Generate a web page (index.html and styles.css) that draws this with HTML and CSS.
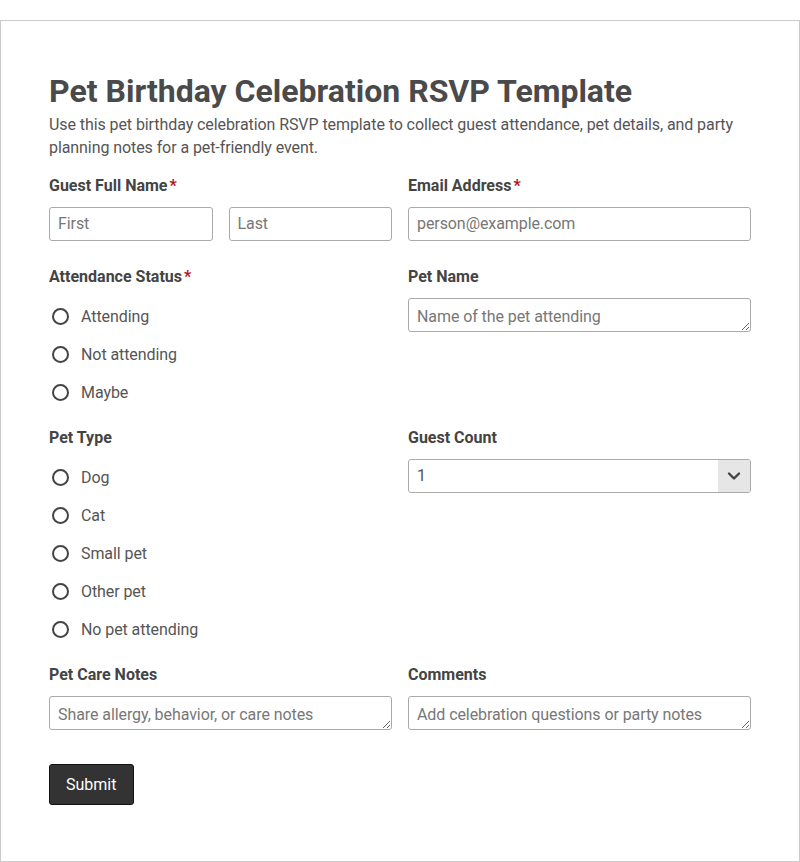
FILE: index.html
```html
<!DOCTYPE html>
<html lang="en">
<head>
    <meta charset="UTF-8">
    <meta name="viewport" content="width=device-width, initial-scale=1.0">
    <title>Pet Birthday Celebration RSVP Template</title>
    <link rel="stylesheet" href="styles.css">
</head>
<body>
    <form class="form-card">
        <h1>Pet Birthday Celebration RSVP Template</h1>
        <p class="intro">Use this pet birthday celebration RSVP template to collect guest attendance, pet details, and party planning notes for a pet-friendly event.</p>

        <div class="form-grid">
            <!-- Nome e email -->
            <div class="field">
                <label class="field-label">Guest Full Name<span class="req">*</span></label>
                <div class="name-row">
                    <input type="text" placeholder="First">
                    <input type="text" placeholder="Last">
                </div>
            </div>
            <div class="field">
                <label class="field-label" for="email">Email Address<span class="req">*</span></label>
                <input type="email" id="email" placeholder="person@example.com">
            </div>

            <div class="field">
                <span class="field-label">Attendance Status<span class="req">*</span></span>
                <div class="radio-list">
                    <label class="radio"><input type="radio" name="attendance"> Attending</label>
                    <label class="radio"><input type="radio" name="attendance"> Not attending</label>
                    <label class="radio"><input type="radio" name="attendance"> Maybe</label>
                </div>
            </div>
            <div class="field">
                <label class="field-label" for="petName">Pet Name</label>
                <textarea id="petName" rows="1" placeholder="Name of the pet attending"></textarea>
            </div>

            <div class="field">
                <span class="field-label">Pet Type</span>
                <div class="radio-list">
                    <label class="radio"><input type="radio" name="petType"> Dog</label>
                    <label class="radio"><input type="radio" name="petType"> Cat</label>
                    <label class="radio"><input type="radio" name="petType"> Small pet</label>
                    <label class="radio"><input type="radio" name="petType"> Other pet</label>
                    <label class="radio"><input type="radio" name="petType"> No pet attending</label>
                </div>
            </div>
            <div class="field">
                <label class="field-label" for="guestCount">Guest Count</label>
                <div class="select-wrap">
                    <select id="guestCount">
                        <option>1</option>
                        <option>2</option>
                        <option>3</option>
                        <option>4</option>
                        <option>5</option>
                    </select>
                    <span class="select-arrow">
                        <svg width="14" height="14" viewBox="0 0 14 14"><path d="M2 4.5 L7 9.5 L12 4.5" fill="none" stroke="#444" stroke-width="2.4" stroke-linecap="round" stroke-linejoin="round"/></svg>
                    </span>
                </div>
            </div>

            <div class="field">
                <label class="field-label" for="careNotes">Pet Care Notes</label>
                <textarea id="careNotes" rows="1" placeholder="Share allergy, behavior, or care notes"></textarea>
            </div>
            <div class="field">
                <label class="field-label" for="comments">Comments</label>
                <textarea id="comments" rows="1" placeholder="Add celebration questions or party notes"></textarea>
            </div>
        </div>

        <button type="button">Submit</button>
    </form>
</body>
</html>
```

FILE: styles.css
```css
body {
    margin: 0;
    padding-top: 20px;
    background-color: #fff;
    color: #4a4a4a;
    font-family: Roboto, "Liberation Sans", Arial, sans-serif;
}
.form-card {
    border: 1px solid #ccc;
    padding: 48px 48px 56px;
    box-sizing: border-box;
    min-height: 842px;
}
h1 {
    margin: 0;
    font-size: 32px;
    line-height: 44px;
    font-weight: bold;
    color: #4a4a4a;
}
.intro {
    margin: 0 0 16px;
    font-size: 16px;
    line-height: 23px;
    color: #555;
    letter-spacing: -0.08px;
}
.form-grid {
    display: grid;
    grid-template-columns: 1fr 1fr;
    column-gap: 16px;
    row-gap: 25px;
}
.field {
    display: flex;
    flex-direction: column;
}
.field-label {
    display: block;
    font-size: 16px;
    line-height: 20px;
    font-weight: bold;
    padding-top: 1px;
    margin-bottom: 11px;
    color: #444;
}
.req {
    color: #b3121b;
    margin-left: 2px;
}
.name-row {
    display: flex;
    gap: 16px;
}
input[type="text"], input[type="email"], textarea, .select-wrap {
    width: 100%;
    height: 34px;
    padding: 5px 8px 7px;
    border: 1px solid #aaa;
    border-radius: 3px;
    background-color: #fff;
    color: #4a4a4a;
    font-family: inherit;
    font-size: 16px;
    line-height: 20px;
    letter-spacing: -0.08px;
    box-sizing: border-box;
    margin: 0;
}
textarea {
    display: block;
    resize: vertical;
    overflow: hidden;
    padding: 8px 8px 4px;
}
::placeholder {
    color: #777;
    opacity: 1;
}
.radio-list {
    display: flex;
    flex-direction: column;
    gap: 18px;
    margin-top: 8px;
}
.radio {
    display: flex;
    align-items: center;
    height: 20px;
    font-size: 16px;
    color: #555;
    letter-spacing: -0.08px;
}
.radio input {
    -webkit-appearance: none;
    appearance: none;
    width: 17px;
    height: 17px;
    border: 2px solid #444;
    border-radius: 50%;
    margin: 0 12px 0 3px;
    box-sizing: border-box;
    background: #fff;
}
.radio input:checked {
    background: radial-gradient(circle, #444 40%, #fff 45%);
}
.select-wrap {
    display: flex;
    padding: 0;
    overflow: hidden;
}
.select-wrap select {
    -webkit-appearance: none;
    appearance: none;
    flex: 1;
    border: none;
    background: transparent;
    padding: 0 8px 2px;
    font-family: inherit;
    font-size: 16px;
    color: #555;
    outline: none;
}
.select-arrow {
    width: 32px;
    display: flex;
    align-items: center;
    justify-content: center;
    background-color: #e6e6e6;
}
button {
    margin-top: 34px;
    padding: 10px 17px 10px 16px;
    background-color: #333;
    color: #fff;
    border: 1px solid #111;
    border-radius: 3px;
    font-family: inherit;
    font-size: 16px;
    line-height: 19px;
    cursor: pointer;
}
button:hover {
    background-color: #222;
}
```
